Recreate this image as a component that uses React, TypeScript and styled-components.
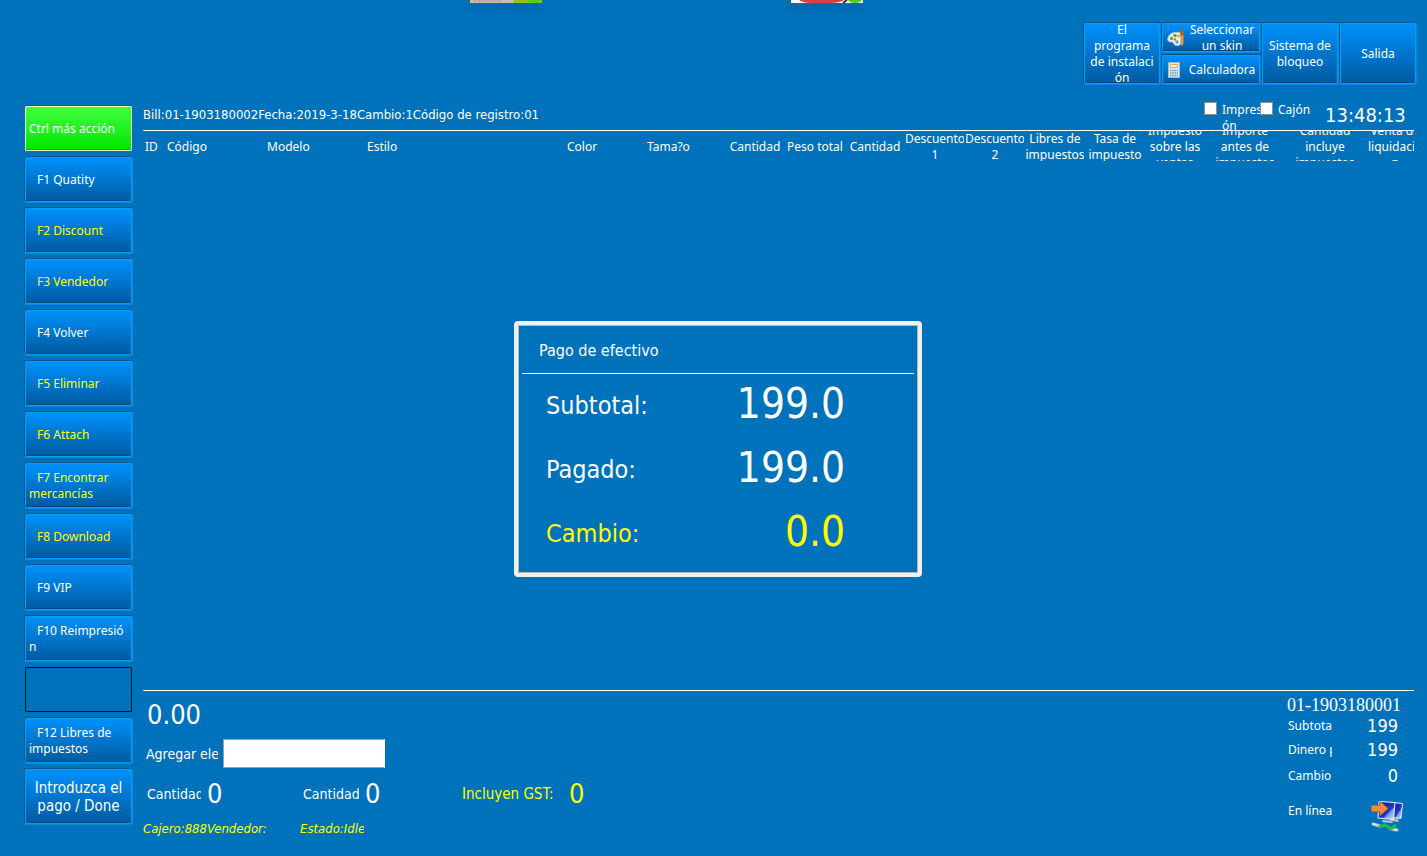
import React from "react";
import styled, { createGlobalStyle, css } from "styled-components";

const GlobalStyle = createGlobalStyle`
  *, *::before, *::after { box-sizing: border-box; }
  body {
    margin: 0;
    background: #0072bc;
    color: #fff;
    font: 12px/16px "Noto Sans", "DejaVu Sans Condensed", sans-serif;
  }
`;

const YELLOW = "#ffff00";
const CONDENSED = `"DejaVu Sans Condensed", "Noto Sans", sans-serif`;

const Screen = styled.div`
  position: relative;
  min-height: 100vh;
  display: flex;
  flex-direction: column;
  overflow: hidden;
`;

const Thumb = styled.svg<{ $left: string }>`
  position: absolute;
  top: 0;
  left: ${(p) => p.$left};
  width: 72px;
  height: 3px;
  box-shadow: 0 5px 10px rgba(0, 40, 90, 0.4);
`;

const TopBar = styled.header`
  display: flex;
  justify-content: flex-end;
  gap: 2px;
  padding: 23px 11px 0 0;
`;

const Stack = styled.div`
  display: flex;
  flex-direction: column;
  gap: 3px;
  width: 98px;
`;

const raised = css`
  border: 1px solid #00a0f2;
  border-radius: 1px;
  background: linear-gradient(#0091fb, #005a9f);
  box-shadow: -1px 0 #005795, 0 -1px #005795, 1px 0 #0089ea, 0 1px #0089ea,
    inset 0 -1px #004a82;
`;

const Button = styled.button`
  ${raised}
  font: inherit;
  color: #fff;
  padding: 0;
  overflow: hidden;
  cursor: pointer;
`;

const TopButton = styled(Button)`
  width: 76px;
  height: 61px;
  display: flex;
  align-items: center;
  justify-content: center;
`;

const IconButton = styled(Button)`
  height: 29px;
  display: flex;
  align-items: center;
  padding-left: 4px;

  svg { flex: none; width: 18px; height: 18px; }
  span { flex: 1; }
`;

const Body = styled.div`
  flex: 1;
  display: flex;
  gap: 11px;
  padding: 16px 13px 0 25px;
`;

const Side = styled.nav`
  flex: none;
  width: 107px;
  display: flex;
  flex-direction: column;
  gap: 6px;
  padding-top: 6px;
`;

const SideButton = styled(Button)<{ $color?: string; $indent?: boolean }>`
  height: 45px;
  padding: 0 0 0 3px;
  text-align: left;
  text-indent: ${(p) => (p.$indent ? "8px" : "0")};
  color: ${(p) => p.$color || "#fff"};
  white-space: nowrap;
`;

const ActiveButton = styled(SideButton)`
  background: linear-gradient(#40ff40, #00e600);
  border-color: #f4ffb0;
  box-shadow: 0 -1px #005795, inset 0 -1px #00b400;
`;

const EmptyButton = styled(SideButton)`
  background: none;
  border-color: #001020;
  box-shadow: none;
`;

const DoneButton = styled(Button)`
  height: 55px;
  font-family: ${CONDENSED};
  font-size: 15px;
  line-height: 18px;
`;

const Main = styled.main`
  flex: 1;
  min-width: 0;
  display: flex;
  flex-direction: column;
`;

const InfoBar = styled.div`
  display: flex;
  align-items: flex-start;
  height: 30px;
`;

const BillInfo = styled.div`
  flex: 1;
  padding-top: 7px;
  font-family: ${CONDENSED};
  font-size: 13px;
  white-space: nowrap;
`;

const Check = styled.label<{ $width: number }>`
  display: flex;
  gap: 5px;
  width: ${(p) => p.$width}px;
  height: 28px;
  margin-top: 2px;
  overflow: hidden;
  white-space: nowrap;

  input {
    appearance: none;
    flex: none;
    width: 13px;
    height: 13px;
    margin: 0;
    border: 1px solid #8e8f8f;
    background: #fff;
  }
`;

const Clock = styled.time`
  width: 89px;
  padding-top: 3px;
  font-family: ${CONDENSED};
  font-size: 20px;
  line-height: 24px;
  white-space: nowrap;
`;

const Table = styled.table`
  width: 100%;
  table-layout: fixed;
  border-collapse: collapse;
  border-top: 1px solid #fff;
`;

const Th = styled.th<{ $left?: boolean }>`
  padding: 0 1px;
  font-weight: 400;
  overflow: hidden;

  div {
    height: 30px;
    display: flex;
    align-items: center;
    justify-content: ${(p) => (p.$left ? "flex-start" : "center")};
    padding-top: 1px;
    padding-left: ${(p) => (p.$left ? "1px" : "0")};
    overflow: hidden;
    white-space: nowrap;
  }
  &:last-child { padding: 0; }
  &:last-child div { justify-content: flex-start; padding-left: 3px; }
`;

const Footer = styled.footer`
  margin-top: auto;
  height: 166px;
  border-top: 1px solid #fff;
  display: flex;
  justify-content: space-between;
`;

const Entry = styled.section`
  display: flex;
  flex-direction: column;
  font-family: ${CONDENSED};
  font-size: 14px;
  line-height: 20px;
`;

const Amount = styled.output`
  padding: 8px 0 0 4px;
  font-size: 27px;
  line-height: 32px;
`;

const AddRow = styled.div`
  display: flex;
  align-items: center;
  gap: 5px;
  padding: 8px 0 0 3px;
`;

const Clip = styled.span<{ $width: number }>`
  flex: none;
  width: ${(p) => p.$width}px;
  overflow: hidden;
  white-space: nowrap;
`;

const ItemInput = styled.input`
  width: 162px;
  height: 29px;
  padding: 0 4px;
  border: 1px solid #a0a0a0;
  border-right-color: #fff;
  background: #fff;
  font: inherit;
`;

const Totals = styled.div`
  display: flex;
  padding: 10px 0 0 4px;
`;

const Total = styled.div<{ $width: number; $gap: number; $color?: string }>`
  display: flex;
  align-items: center;
  gap: ${(p) => p.$gap}px;
  width: ${(p) => p.$width}px;
  color: ${(p) => p.$color || "#fff"};
  font-size: ${(p) => (p.$color ? "15px" : "14px")};

  output { font-size: 27px; line-height: 32px; }
`;

const Status = styled.div`
  display: flex;
  padding-top: 10px;
  font-size: 13px;
  line-height: 18px;
  font-style: italic;
  color: ${YELLOW};
`;

const LastBill = styled.section`
  width: 127px;
  padding-top: 4px;

  h2 {
    margin: 0;
    font: 18px/20px "Liberation Serif", serif;
  }
`;

const LastRow = styled.div<{ $height: number }>`
  display: flex;
  align-items: center;
  justify-content: space-between;
  height: ${(p) => p.$height}px;
  padding: 0 16px 0 1px;

  output { font-family: ${CONDENSED}; font-size: 18px; }
`;

const OnlineRow = styled(LastRow)`
  padding-right: 11px;
  svg { width: 32px; height: 32px; margin-top: 10px; }
`;

const Overlay = styled.div`
  position: absolute;
  inset: 0;
  display: grid;
  place-items: center;
  padding: 42px 0 0 9px;
  pointer-events: none;
`;

const Dialog = styled.section`
  width: 408px;
  height: 256px;
  padding: 0 4px;
  border: 4px solid #f0f0f0;
  border-radius: 4px;
  background: #0072bc;
  box-shadow: inset 0 0 0 1px #b8b8b8;
  font-family: ${CONDENSED};
  pointer-events: auto;

  h1 {
    height: 49px;
    margin: 0;
    padding-left: 17px;
    border-bottom: 1px solid #fff;
    font-size: 16px;
    font-weight: 400;
    line-height: 52px;
  }
`;

const PayRow = styled.div<{ $color?: string }>`
  display: flex;
  justify-content: space-between;
  align-items: center;
  height: 64px;
  padding: 0 69px 0 24px;
  font-size: 25px;
  line-height: 60px;
  color: ${(p) => p.$color || "#fff"};

  output { font-size: 42px; line-height: 56px; padding-bottom: 4px; }
`;

type Key = { label: React.ReactNode; yellow?: boolean; empty?: boolean };

const keys: Key[] = [
  { label: "F1 Quatity" },
  { label: "F2 Discount", yellow: true },
  { label: "F3 Vendedor", yellow: true },
  { label: "F4 Volver" },
  { label: "F5 Eliminar", yellow: true },
  { label: "F6 Attach", yellow: true },
  { label: <>F7 Encontrar<br />mercancías</>, yellow: true },
  { label: "F8 Download", yellow: true },
  { label: "F9 VIP" },
  { label: <>F10 Reimpresió<br />n</> },
  { label: "", empty: true },
  { label: <>F12 Libres de<br />impuestos</> },
];

type Column = { width?: number; label: React.ReactNode; left?: boolean };

const columns: Column[] = [
  { width: 22, label: "ID", left: true },
  { width: 100, label: "Código", left: true },
  { width: 100, label: "Modelo", left: true },
  { label: "Estilo", left: true },
  { width: 80, label: "Color", left: true },
  { width: 80, label: "Tama?o", left: true },
  { width: 60, label: "Cantidad" },
  { width: 60, label: "Peso total" },
  { width: 60, label: "Cantidad" },
  { width: 60, label: <>Descuento<br />1</> },
  { width: 60, label: <>Descuento<br />2</> },
  { width: 60, label: <>Libres de<br />impuestos</> },
  { width: 60, label: <>Tasa de<br />impuesto</> },
  { width: 60, label: <>Impuesto<br />sobre las<br />ventas</> },
  { width: 80, label: <>Importe<br />antes de<br />impuestos</> },
  { width: 80, label: <>Cantidad<br />incluye<br />impuestos</> },
  { width: 49, label: <>Venta de<br />liquidació<br />n</> },
];

const PaletteIcon = () => (
  <svg viewBox="0 0 18 18" aria-hidden="true">
    <path d="M1 9C2 4 8 2 14 4v10c-1 3-4 3-6 2-2-1-1-3-3-3-3 0-5-1-4-4z" fill="#eef2f4" stroke="#a8bccb" />
    <circle cx="4.500" cy="9.500" r="1.700" fill="#4caf3c" />
    <circle cx="8" cy="6.500" r="1.700" fill="#3fae4a" />
    <circle cx="11.300" cy="7" r="1.500" fill="#f0a020" />
    <circle cx="8" cy="10.500" r="1.300" fill="#e8603a" />
    <circle cx="10" cy="13" r="1.700" fill="#4aa3e0" />
    <path d="M13.500 6h3v9l-1.500 2-1.500-2z" fill="#e8963a" />
    <path d="M13.200 6.500V2l1.300-2h1L17 2v4.500z" fill="#a8642c" />
  </svg>
);

const CalculatorIcon = () => (
  <svg viewBox="0 0 18 18" aria-hidden="true">
    <path d="M1.500 1.500h11v15h-11z" fill="#dce9f3" stroke="#9dbcd3" />
    <path d="M3.500 3.500h7v3h-7z" fill="#fff" stroke="#f0a23c" />
    <path d="M3 9.500h8M3 12h8M3 14.500h8" stroke="#6f9cc0" strokeWidth="1.500" strokeDasharray="1.500 .7" />
  </svg>
);

const NetworkIcon = () => (
  <svg viewBox="0 0 32 32" role="img" aria-label="En línea">
    <defs>
      <linearGradient id="panel" x2="1" y2="1">
        <stop offset="0" stopColor="#0a1494" />
        <stop offset=".6" stopColor="#1c3cc4" />
        <stop offset=".65" stopColor="#6e94ec" />
        <stop offset="1" stopColor="#d8ecff" />
      </linearGradient>
    </defs>
    <path d="M20 18l7 1 1 3-9-1z" fill="#b8bcc0" />
    <path d="M22 2.500l9.500 1-1.500 15-9-1z" fill="url(#panel)" stroke="#e4e8ec" />
    <path d="M8 1.500l16 1-1.500 17L7 18z" fill="url(#panel)" stroke="#eef0f2" />
    <path d="M12 20l8 1 2 2-11-1z" fill="#c8ccd0" />
    <path d="M.5 5.500H9v-4l8 7-8 7v-4H.5z" fill="#f58a3c" stroke="#d0641c" />
    <path d="M2 24l7 2M20 29l6 1" fill="none" stroke="#b8ccc8" strokeWidth="3" strokeLinecap="round" />
    <path d="M2 24l4 1M23 30l3 0" fill="none" stroke="#e8f0f0" strokeWidth="1" />
    <path d="M8 27l6-2 6 4 5-4" fill="none" stroke="#22b84c" strokeWidth="3" />
  </svg>
);

export default function App() {
  return (
    <Screen>
      <GlobalStyle />
      <Thumb $left="470px" viewBox="0 0 72 3" aria-hidden="true">
        <path d="M0 0h44v3H0z" fill="#c4bdb0" />
        <path d="M4 1h27" stroke="#c88f88" strokeDasharray="3 1" />
        <path d="M44 0h28v3H44z" fill="#94c11f" />
        <path d="M57 0h14q-2 3-7 3t-7-3z" fill="#42d61e" />
      </Thumb>
      <Thumb $left="791px" viewBox="0 0 72 3" aria-hidden="true">
        <path d="M0 0h72v3H0z" fill="#fff" />
        <path d="M8 0h45q-4 3-14 3H20Q12 3 8 0z" fill="#d8403c" />
        <path d="M52 3l4-3" stroke="#333" strokeWidth="2" />
        <path d="M57 0h14q-2 3-7 3t-7-3z" fill="#42d61e" />
      </Thumb>

      <TopBar>
        <TopButton>El<br />programa<br />de instalaci<br />ón</TopButton>
        <Stack>
          <IconButton><PaletteIcon /><span>Seleccionar un skin</span></IconButton>
          <IconButton><CalculatorIcon /><span>Calculadora</span></IconButton>
        </Stack>
        <TopButton>Sistema de bloqueo</TopButton>
        <TopButton>Salida</TopButton>
      </TopBar>

      <Body>
        <Side>
          <ActiveButton>Ctrl más acción</ActiveButton>
          {keys.map((k, i) =>
            k.empty ? (
              <EmptyButton key={i} aria-label="F11" />
            ) : (
              <SideButton key={i} $indent $color={k.yellow ? YELLOW : undefined}>
                {k.label}
              </SideButton>
            )
          )}
          <DoneButton>Introduzca el<br />pago / Done</DoneButton>
        </Side>

        <Main>
          <InfoBar>
            <BillInfo>Bill:01-1903180002Fecha:2019-3-18Cambio:1Código de registro:01</BillInfo>
            <Check $width={56}>
              <input type="checkbox" />
              <span>Impresi<br />ón</span>
            </Check>
            <Check $width={65}>
              <input type="checkbox" />
              <span>Cajón</span>
            </Check>
            <Clock>13:48:13</Clock>
          </InfoBar>

          <Table>
            <colgroup>
              {columns.map((c, i) => (
                <col key={i} width={c.width} />
              ))}
            </colgroup>
            <thead>
              <tr>
                {columns.map((c, i) => (
                  <Th key={i} $left={c.left} scope="col">
                    <div><span>{c.label}</span></div>
                  </Th>
                ))}
              </tr>
            </thead>
          </Table>

          <Footer>
            <Entry>
              <Amount>0.00</Amount>
              <AddRow>
                <Clip as="label" htmlFor="item" $width={72}>Agregar elemento</Clip>
                <ItemInput id="item" type="text" />
              </AddRow>
              <Totals>
                <Total $width={156} $gap={6}>
                  <Clip $width={54}>Cantidad</Clip>
                  <output>0</output>
                </Total>
                <Total $width={159} $gap={6}>
                  <Clip $width={56}>Cantidad</Clip>
                  <output>0</output>
                </Total>
                <Total $width={130} $gap={14} $color={YELLOW}>
                  <Clip $width={93}>Incluyen GST:</Clip>
                  <output>0</output>
                </Total>
              </Totals>
              <Status>
                <Clip $width={64}>Cajero:888</Clip>
                <Clip $width={93}>Vendedor:</Clip>
                <Clip $width={64}>Estado:Idle</Clip>
              </Status>
            </Entry>

            <LastBill>
              <h2>01-1903180001</h2>
              <LastRow $height={22}>
                <Clip $width={44}>Subtotal</Clip>
                <output>199</output>
              </LastRow>
              <LastRow $height={26}>
                <Clip $width={44}>Dinero pagado</Clip>
                <output>199</output>
              </LastRow>
              <LastRow $height={25}>
                <Clip $width={44}>Cambio</Clip>
                <output>0</output>
              </LastRow>
              <OnlineRow $height={46}>
                <Clip $width={46}>En línea</Clip>
                <NetworkIcon />
              </OnlineRow>
            </LastBill>
          </Footer>
        </Main>
      </Body>

      <Overlay>
        <Dialog role="dialog" aria-labelledby="pay-title">
          <h1 id="pay-title">Pago de efectivo</h1>
          <PayRow>Subtotal:<output>199.0</output></PayRow>
          <PayRow>Pagado:<output>199.0</output></PayRow>
          <PayRow $color={YELLOW}>Cambio:<output>0.0</output></PayRow>
        </Dialog>
      </Overlay>
    </Screen>
  );
}
